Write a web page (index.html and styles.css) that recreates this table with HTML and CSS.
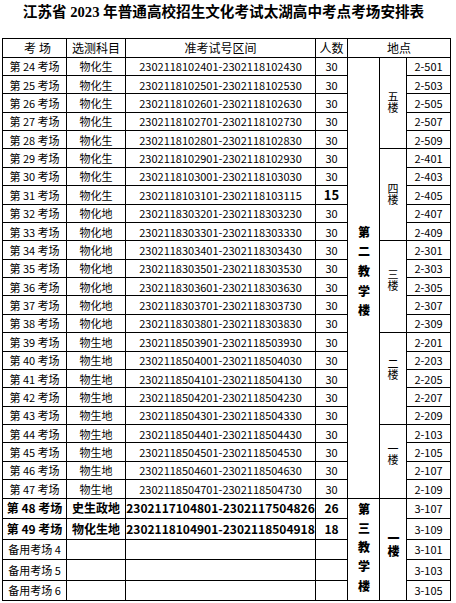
FILE: index.html
```html
<!DOCTYPE html>
<html lang="zh-CN">
<head>
<meta charset="utf-8">
<title>考场安排表</title>
<link rel="stylesheet" href="styles.css">
</head>
<body>
<div class="sheet">
  <div class="title">江苏省 2023 年普通高校招生文化考试太湖高中考点考场安排表</div>
  <table class="grid">
    <colgroup>
      <col class="c1"><col class="c2"><col class="c3"><col class="c4"><col class="c5"><col class="c6"><col class="c7">
    </colgroup>
    <thead>
      <tr class="hd">
        <th class="h-room">考场</th>
        <th>选测科目</th>
        <th>准考试号区间</th>
        <th>人数</th>
        <th colspan="3">地点</th>
      </tr>
    </thead>
    <tbody>
      <tr class="r"><td>第 24 考场</td><td>物化生</td><td>2302118102401-2302118102430</td><td>30</td>
        <td rowspan="24" class="bld bld-2"><span class="vt">第二教学楼</span></td>
        <td rowspan="5" class="fl"><span class="vf">五楼</span></td><td>2-501</td></tr>
      <tr class="r"><td>第 25 考场</td><td>物化生</td><td>2302118102501-2302118102530</td><td>30</td><td>2-503</td></tr>
      <tr class="r"><td>第 26 考场</td><td>物化生</td><td>2302118102601-2302118102630</td><td>30</td><td>2-505</td></tr>
      <tr class="r"><td>第 27 考场</td><td>物化生</td><td>2302118102701-2302118102730</td><td>30</td><td>2-507</td></tr>
      <tr class="r"><td>第 28 考场</td><td>物化生</td><td>2302118102801-2302118102830</td><td>30</td><td>2-509</td></tr>
      <tr class="r"><td>第 29 考场</td><td>物化生</td><td>2302118102901-2302118102930</td><td>30</td>
        <td rowspan="5" class="fl"><span class="vf">四楼</span></td><td>2-401</td></tr>
      <tr class="r"><td>第 30 考场</td><td>物化生</td><td>2302118103001-2302118103030</td><td>30</td><td>2-403</td></tr>
      <tr class="r"><td>第 31 考场</td><td>物化生</td><td>2302118103101-2302118103115</td><td class="strong15">15</td><td>2-405</td></tr>
      <tr class="r"><td>第 32 考场</td><td>物化地</td><td>2302118303201-2302118303230</td><td>30</td><td>2-407</td></tr>
      <tr class="r"><td>第 33 考场</td><td>物化地</td><td>2302118303301-2302118303330</td><td>30</td><td>2-409</td></tr>
      <tr class="r"><td>第 34 考场</td><td>物化地</td><td>2302118303401-2302118303430</td><td>30</td>
        <td rowspan="5" class="fl fl-3"><span class="vf">三楼</span></td><td>2-301</td></tr>
      <tr class="r"><td>第 35 考场</td><td>物化地</td><td>2302118303501-2302118303530</td><td>30</td><td>2-303</td></tr>
      <tr class="r"><td>第 36 考场</td><td>物化地</td><td>2302118303601-2302118303630</td><td>30</td><td>2-305</td></tr>
      <tr class="r"><td>第 37 考场</td><td>物化地</td><td>2302118303701-2302118303730</td><td>30</td><td>2-307</td></tr>
      <tr class="r"><td>第 38 考场</td><td>物化地</td><td>2302118303801-2302118303830</td><td>30</td><td>2-309</td></tr>
      <tr class="r"><td>第 39 考场</td><td>物生地</td><td>2302118503901-2302118503930</td><td>30</td>
        <td rowspan="5" class="fl fl-2"><span class="vf">二楼</span></td><td>2-201</td></tr>
      <tr class="r"><td>第 40 考场</td><td>物生地</td><td>2302118504001-2302118504030</td><td>30</td><td>2-203</td></tr>
      <tr class="r"><td>第 41 考场</td><td>物生地</td><td>2302118504101-2302118504130</td><td>30</td><td>2-205</td></tr>
      <tr class="r"><td>第 42 考场</td><td>物生地</td><td>2302118504201-2302118504230</td><td>30</td><td>2-207</td></tr>
      <tr class="r"><td>第 43 考场</td><td>物生地</td><td>2302118504301-2302118504330</td><td>30</td><td>2-209</td></tr>
      <tr class="r"><td>第 44 考场</td><td>物生地</td><td>2302118504401-2302118504430</td><td>30</td>
        <td rowspan="4" class="fl fl-1"><span class="vf">一楼</span></td><td>2-103</td></tr>
      <tr class="r"><td>第 45 考场</td><td>物生地</td><td>2302118504501-2302118504530</td><td>30</td><td>2-105</td></tr>
      <tr class="r"><td>第 46 考场</td><td>物生地</td><td>2302118504601-2302118504630</td><td>30</td><td>2-107</td></tr>
      <tr class="r"><td>第 47 考场</td><td>物生地</td><td>2302118504701-2302118504730</td><td>30</td><td>2-109</td></tr>
      <tr class="b strong"><td>第 48 考场</td><td>史生政地</td><td>2302117104801-2302117504826</td><td>26</td>
        <td rowspan="5" class="bld bld-3"><span class="vt vt-3">第三教学楼</span></td>
        <td rowspan="5" class="fl fl-b"><span class="vf vf-b">一楼</span></td><td class="room">3-107</td></tr>
      <tr class="b strong"><td>第 49 考场</td><td>物化生地</td><td>2302118104901-2302118504918</td><td>18</td><td class="room">3-109</td></tr>
      <tr class="b"><td>备用考场 4</td><td></td><td></td><td></td><td>3-101</td></tr>
      <tr class="b"><td>备用考场 5</td><td></td><td></td><td></td><td>3-103</td></tr>
      <tr class="b"><td>备用考场 6</td><td></td><td></td><td></td><td>3-105</td></tr>
    </tbody>
  </table>
</div>
</body>
</html>
```
FILE: styles.css
```css
html, body {
  margin: 0;
  padding: 0;
  background: #ffffff;
}

body {
  font-family: "Noto Sans CJK SC", sans-serif;
  color: #000000;
}

.sheet {
  padding-left: 2px;
}

.title {
  width: 447px;
  height: 24px;
  line-height: 24px;
  margin: 0 0 13.5px -2px;
  text-align: center;
  font-family: "Liberation Serif", "Noto Sans CJK SC", serif;
  font-size: 14.6px;
  font-weight: 700;
  white-space: nowrap;
}

.grid {
  border-collapse: collapse;
  table-layout: fixed;
  width: 449px;
}

.c1 { width: 64px; }
.c2 { width: 59px; }
.c3 { width: 190px; }
.c4 { width: 32px; }
.c5 { width: 32px; }
.c6 { width: 27px; }
.c7 { width: 44px; }

.grid th,
.grid td {
  border: 1px solid #000000;
  padding: 0;
  text-align: center;
  vertical-align: middle;
  font-size: 11px;
  line-height: 12px;
  font-weight: 400;
  white-space: nowrap;
  overflow: hidden;
}

.grid th {
  font-size: 12px;
}

.grid .h-room {
  letter-spacing: 3px;
  padding-left: 9px;
}

.hd { height: 19px; }
.r { height: 18.375px; }
.b { height: 20px; }

.strong td {
  font-size: 12px;
  font-weight: 700;
}

.strong td.room {
  font-size: 11px;
  font-weight: 400;
}

.grid td.strong15 {
  font-size: 13px;
  font-weight: 700;
}

.vt {
  display: inline-block;
  writing-mode: vertical-rl;
  text-orientation: upright;
  font-size: 12px;
  line-height: 14px;
  letter-spacing: 7.7px;
  font-weight: 900;
}

.vt-3 {
  letter-spacing: 7.3px;
}

.grid td.bld-2 { padding-bottom: 3px; }
.grid td.bld-3 { padding-top: 4px; }

.vf {
  display: inline-block;
  writing-mode: vertical-rl;
  text-orientation: upright;
  font-size: 11px;
  line-height: 12px;
  letter-spacing: 0.6px;
}

.vf-b {
  font-size: 12px;
  font-weight: 900;
  letter-spacing: 1px;
}

.grid td.fl-3 { padding-bottom: 12px; }
.grid td.fl-2 { padding-bottom: 16px; }
.grid td.fl-1 { padding-bottom: 12px; }
.grid td.fl-b { padding-bottom: 8px; }
```
